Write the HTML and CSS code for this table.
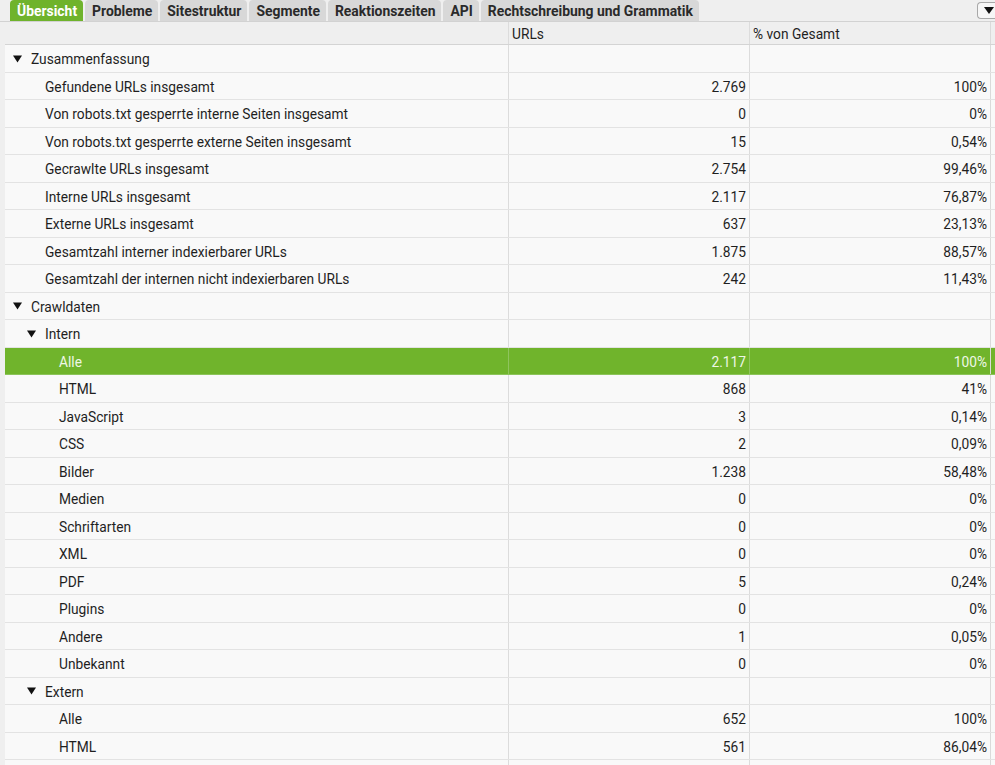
FILE: index.html
```html
<!DOCTYPE html>
<html lang="de">
<head>
<meta charset="utf-8">
<title>Übersicht</title>
<link rel="stylesheet" href="styles.css">
</head>
<body>
<div class="app">
  <div class="tabbar">
    <div class="tabs">
      <div class="tab active">Übersicht</div>
      <div class="tab">Probleme</div>
      <div class="tab">Sitestruktur</div>
      <div class="tab">Segmente</div>
      <div class="tab">Reaktionszeiten</div>
      <div class="tab">API</div>
      <div class="tab">Rechtschreibung und Grammatik</div>
    </div>
    <div class="menu-btn"><svg width="10" height="7" viewBox="0 0 10 7"><polygon points="0,0 10,0 5,7" fill="#111"/></svg></div>
  </div>
  <div class="grid">
    <div class="row head">
      <div class="cell"></div>
      <div class="cell">URLs</div>
      <div class="cell">% von Gesamt</div>
    </div>
    <div class="rows" id="rows"></div>
  </div>
</div>
<script src="app.js"></script>
</body>
</html>
```

FILE: app.js
```js
const data = [
  [0, true, "Zusammenfassung", "", ""],
  [1, false, "Gefundene URLs insgesamt", "2.769", "100%"],
  [1, false, "Von robots.txt gesperrte interne Seiten insgesamt", "0", "0%"],
  [1, false, "Von robots.txt gesperrte externe Seiten insgesamt", "15", "0,54%"],
  [1, false, "Gecrawlte URLs insgesamt", "2.754", "99,46%"],
  [1, false, "Interne URLs insgesamt", "2.117", "76,87%"],
  [1, false, "Externe URLs insgesamt", "637", "23,13%"],
  [1, false, "Gesamtzahl interner indexierbarer URLs", "1.875", "88,57%"],
  [1, false, "Gesamtzahl der internen nicht indexierbaren URLs", "242", "11,43%"],
  [0, true, "Crawldaten", "", ""],
  [1, true, "Intern", "", ""],
  [2, false, "Alle", "2.117", "100%", true],
  [2, false, "HTML", "868", "41%"],
  [2, false, "JavaScript", "3", "0,14%"],
  [2, false, "CSS", "2", "0,09%"],
  [2, false, "Bilder", "1.238", "58,48%"],
  [2, false, "Medien", "0", "0%"],
  [2, false, "Schriftarten", "0", "0%"],
  [2, false, "XML", "0", "0%"],
  [2, false, "PDF", "5", "0,24%"],
  [2, false, "Plugins", "0", "0%"],
  [2, false, "Andere", "1", "0,05%"],
  [2, false, "Unbekannt", "0", "0%"],
  [1, true, "Extern", "", ""],
  [2, false, "Alle", "652", "100%"],
  [2, false, "HTML", "561", "86,04%"],
  [2, false, "", "", ""]
];
const tri = '<svg class="tri" width="9" height="8" viewBox="0 0 9 8"><polygon points="0,0.5 9,0.5 4.5,7.5" fill="#111"/></svg>';
const rows = document.getElementById("rows");
rows.innerHTML = data.map(([lvl, group, label, a, b, sel]) => {
  const inner = group
    ? `<span class="lvl${lvl} grp">${tri}<span>${label}</span></span>`
    : `<span class="lvl${lvl} leaf">${label}</span>`;
  return `<div class="row${sel ? " selected" : ""}"><div class="cell name">${inner}</div><div class="cell num">${a}</div><div class="cell num">${b}</div></div>`;
}).join("");
```

FILE: styles.css
```css
html, body {
  margin: 0;
  padding: 0;
  height: 100%;
  overflow: hidden;
}
body {
  background: #efefef;
  font-family: Roboto, "Liberation Sans", sans-serif;
  color: #1f1f1f;
}
.app {
  width: 995px;
  height: 765px;
  overflow: hidden;
}
.tabbar {
  height: 21px;
  display: flex;
  justify-content: space-between;
  align-items: flex-start;
  border-bottom: 1px solid #d2d2d2;
  padding-left: 10px;
}
.tabs {
  display: flex;
  gap: 2px;
  height: 21px;
}
.tab {
  height: 21px;
  box-sizing: border-box;
  padding: 3px 6px 0 7px;
  background: #d8d8d8;
  border-radius: 4px 4px 0 0;
  font-size: 13.9px;
  font-weight: 700;
  line-height: 17px;
  color: #2a2a2a;
  white-space: nowrap;
}
.tab.active {
  background: #6fb32c;
  color: #ffffff;
}
.menu-btn {
  margin-top: 2px;
  width: 18px;
  height: 17px;
  box-sizing: border-box;
  border: 1px solid #a8a8a8;
  border-right: none;
  border-radius: 4px 0 0 4px;
  background: #f6f6f6;
  display: flex;
  align-items: center;
  justify-content: center;
  padding-left: 4px;
}
.grid {
  margin-left: 5px;
  width: 990px;
}
.row {
  display: grid;
  grid-template-columns: 503px 241px 241px 5px;
  height: 27.5px;
  box-sizing: border-box;
  border-bottom: 1px solid #e3e3e3;
  background: #f9f9f9;
  font-size: 13.75px;
}
.row::after {
  content: "";
  border-left: 1px solid #dadada;
}
.row.head {
  height: 23px;
  background: #efefef;
  border-bottom: 1px solid #d4d4d4;
}
.cell {
  display: flex;
  align-items: center;
  white-space: nowrap;
  overflow: hidden;
  box-sizing: border-box;
  padding: 2px 4px 0 4px;
}
.cell + .cell {
  border-left: 1px solid #dcdcdc;
}
.head .cell {
  padding-left: 3px;
}
.num {
  justify-content: flex-end;
  padding: 2px 3px 0 0;
}
.name {
  padding-left: 0;
}
.grp {
  display: flex;
  align-items: center;
}
.tri {
  margin-right: 9px;
  margin-top: -1px;
}
.lvl0.grp { padding-left: 8px; }
.lvl1.grp { padding-left: 22px; }
.lvl1.leaf { padding-left: 40px; }
.lvl2.leaf { padding-left: 54px; }
.row.selected {
  background: #70b42c;
  color: #eef7e6;
  border-bottom-color: #8cc45a;
}
.row.selected .cell + .cell {
  border-left-color: #8fc45e;
}
```
